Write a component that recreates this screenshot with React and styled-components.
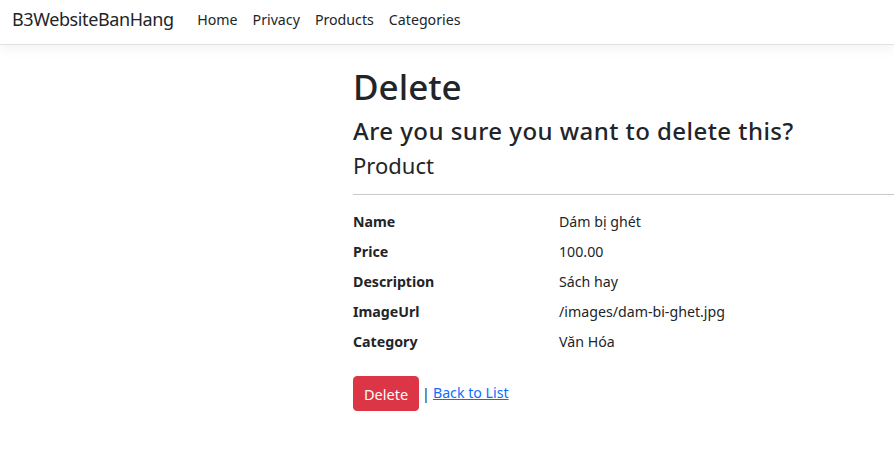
import React from "react";
import styled, { createGlobalStyle } from "styled-components";

const GlobalStyle = createGlobalStyle`
  html, body {
    margin: 0;
    padding: 0;
    background: #ffffff;
    color: #212529;
    font-family: "Noto Sans", "Open Sans", sans-serif;
    font-size: 14.2px;
  }
  * {
    box-sizing: border-box;
  }
`;

const Navbar = styled.nav`
  display: flex;
  align-items: center;
  height: 45px;
  padding: 0 12px 6px;
  background: #ffffff;
  border-bottom: 1px solid #dee2e6;
  box-shadow: 0 4px 12px rgba(0, 0, 0, 0.05);
`;

const Brand = styled.a`
  font-size: 18px;
  letter-spacing: -0.4px;
  color: #212529;
  text-decoration: none;
  margin-right: 16px;
`;

const NavList = styled.ul`
  display: flex;
  list-style: none;
  margin: 0;
  padding: 0;
`;

const NavLink = styled.li`
  font-size: 14.2px;
  padding: 0 7.5px;
  color: #212529;
`;

const Main = styled.main`
  padding: 21px 0 0 353px;
`;

const Title = styled.h1`
  font-size: 35px;
  font-weight: 500;
  line-height: 1.2;
  margin: 0 0 9px;
`;

const Question = styled.h3`
  font-size: 24px;
  font-weight: 500;
  letter-spacing: 0.45px;
  line-height: 1.2;
  margin: 0 0 6px;
`;

const Subtitle = styled.h4`
  font-size: 22px;
  font-weight: 400;
  line-height: 1.2;
  margin: 0;
`;

const Hr = styled.hr`
  border: 0;
  border-top: 1px solid #c8c9ca;
  margin: 16px 0 16px;
`;

const Details = styled.dl`
  display: grid;
  grid-template-columns: 206px 1fr;
  row-gap: 9px;
  margin: 0 0 24px;
  line-height: 21px;
`;

const Term = styled.dt`
  font-weight: 700;
`;

const Value = styled.dd`
  margin: 0;
`;

const Actions = styled.div`
  display: flex;
  align-items: center;
  gap: 3px;
`;

const DangerButton = styled.button`
  font-family: inherit;
  font-size: 14.5px;
  color: #ffffff;
  background: #dc3545;
  border: 1px solid #dc3545;
  border-radius: 4px;
  height: 35px;
  padding: 0 10px;
  cursor: pointer;
`;

const Link = styled.a`
  color: #0d6efd;
  text-decoration: underline;
  margin-bottom: 3px;
`;

const fields = [
  ["Name", "Dám bị ghét"],
  ["Price", "100.00"],
  ["Description", "Sách hay"],
  ["ImageUrl", "/images/dam-bi-ghet.jpg"],
  ["Category", "Văn Hóa"],
];

export default function App() {
  return (
    <>
      <GlobalStyle />
      <Navbar>
        <Brand>B3WebsiteBanHang</Brand>
        <NavList>
          <NavLink>Home</NavLink>
          <NavLink>Privacy</NavLink>
          <NavLink>Products</NavLink>
          <NavLink>Categories</NavLink>
        </NavList>
      </Navbar>
      <Main>
        <Title>Delete</Title>
        <Question>Are you sure you want to delete this?</Question>
        <Subtitle>Product</Subtitle>
        <Hr />
        <Details>
          {fields.map(([k, v]) => (
            <React.Fragment key={k}>
              <Term>{k}</Term>
              <Value>{v}</Value>
            </React.Fragment>
          ))}
        </Details>
        <Actions>
          <DangerButton>Delete</DangerButton>
          <span>|</span>
          <Link href="#">Back to List</Link>
        </Actions>
      </Main>
    </>
  );
}
